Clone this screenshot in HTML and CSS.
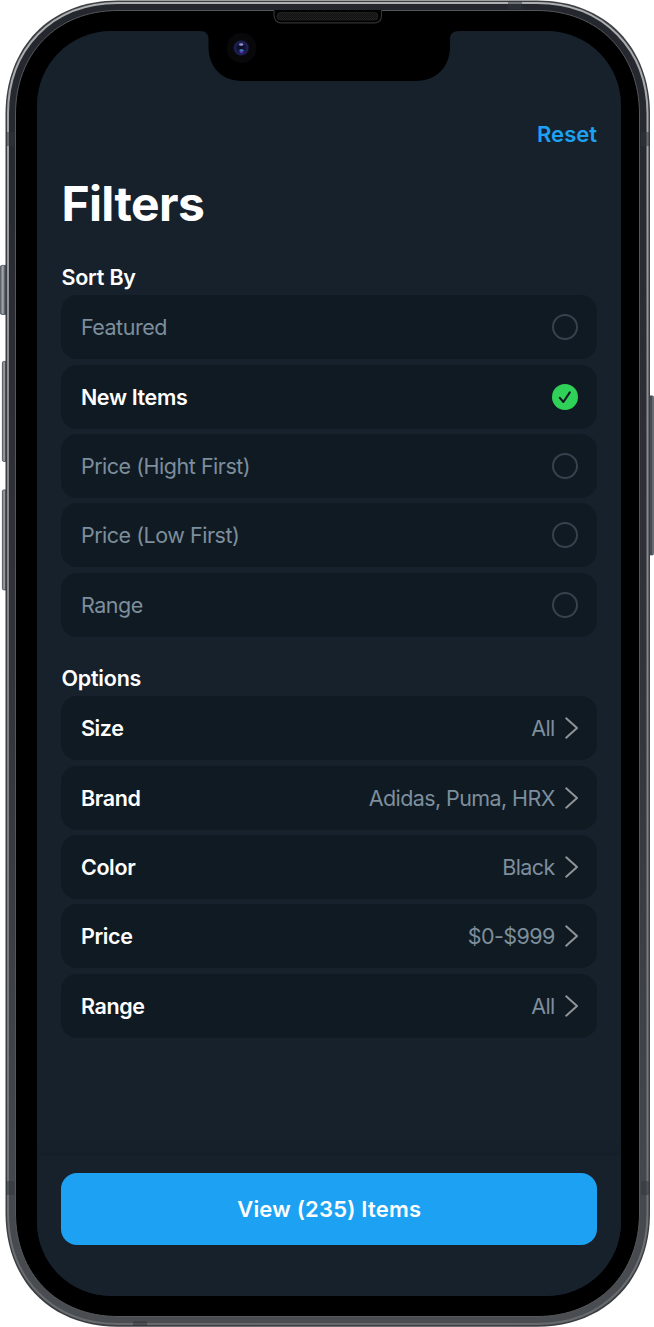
FILE: index.html
```html
<!DOCTYPE html>
<html lang="en">
<head>
<meta charset="utf-8">
<title>Filters</title>
<link rel="stylesheet" href="styles.css">
</head>
<body>
<div class="device">
  <svg class="frame" viewBox="0 0 654 1327" aria-hidden="true">
    <defs>
      <linearGradient id="side" x1="0" x2="1"><stop offset="0" stop-color="#5b6066"/><stop offset=".35" stop-color="#a9adb1"/><stop offset=".6" stop-color="#596069"/><stop offset="1" stop-color="#41464d"/></linearGradient>
      <linearGradient id="sideR" x1="1" x2="0"><stop offset="0" stop-color="#8c9094"/><stop offset=".45" stop-color="#3b4045"/><stop offset="1" stop-color="#777b80"/></linearGradient>
      <linearGradient id="shine" x1="0" x2="0" y1="0" y2="1"><stop offset="0" stop-color="#aeb0b0"/><stop offset=".3" stop-color="#8b8c91"/><stop offset=".85" stop-color="#73767b"/><stop offset="1" stop-color="#67696c"/></linearGradient>
      <linearGradient id="band" x1="0" x2="0" y1="0" y2="1"><stop offset="0" stop-color="#24272e"/><stop offset=".5" stop-color="#32323a"/><stop offset=".85" stop-color="#42464b"/><stop offset="1" stop-color="#4a4d51"/></linearGradient>
      <pattern id="mesh" width="2" height="2" patternUnits="userSpaceOnUse"><rect width="2" height="2" fill="#111"/><rect width="1" height="1" fill="#222"/><rect x="1" y="1" width="1" height="1" fill="#1d1d1d"/></pattern>
      <radialGradient id="lens"><stop offset="0" stop-color="#0b0c20"/><stop offset=".5" stop-color="#10123a"/><stop offset=".8" stop-color="#20235c"/><stop offset="1" stop-color="#0c0c18"/></radialGradient>
    </defs>
    <g stroke="#444a51" stroke-width=".8">
      <rect x=".4" y="265.4" width="7" height="49" rx="1.5" fill="url(#side)"/>
      <rect x="2.4" y="361.4" width="5" height="100" rx="1.5" fill="url(#side)"/>
      <rect x="2.4" y="489.9" width="5" height="100" rx="1.5" fill="url(#side)"/>
      <rect x="648" y="395.9" width="5.7" height="159" rx="1.5" fill="url(#sideR)"/>
    </g>
    <path id="body" fill="#3b3e43" d="M118 .5H537C606 .5 650 48 650 114V1213C650 1279 606 1326.7 537 1326.7H118C49 1326.7 5.500 1279 5.500 1213V114C5.500 48 49 .5 118 .5Z"/>
    <path fill="url(#band)" stroke="url(#shine)" stroke-width="2" d="M118 3H537C604 3 647.500 50 647.500 114V1213C647.500 1277 604 1324 537 1324H118C51 1324 8 1277 8 1213V114C8 50 51 3 118 3Z"/>
    <path fill="#000" stroke="#55585b" stroke-width="1" d="M118 10.500H537C599 10.500 639.500 54 639.500 114V1213C639.500 1273 599 1316.500 537 1316.500H118C56 1316.500 15.500 1273 15.500 1213V114C15.500 54 56 10.500 118 10.500Z"/>
    <g fill="#30363c" fill-opacity=".5">
      <rect x="508" y="1" width="14" height="8"/>
      <rect x="6" y="132" width="8.500" height="14"/><rect x="641" y="132" width="8.500" height="14"/>
      <rect x="6" y="1181" width="8.500" height="14"/><rect x="641" y="1181" width="8.500" height="14"/>
      <rect x="133" y="1321" width="14" height="5"/>
    </g>
  </svg>

  <main class="screen">
    <header class="toolbar"><a class="reset">Reset</a></header>
    <h1 class="title">Filters</h1>

    <h2 class="section-title">Sort By</h2>
    <ul class="list">
      <li class="row muted"><span>Featured</span><i class="radio"></i></li>
      <li class="row"><span class="strong">New Items</span>
        <svg class="check" viewBox="0 0 26 26"><circle cx="13" cy="13" r="13" fill="#30d158"/><path d="M7.800 13.900L11.400 18L17.800 8.400" fill="none" stroke="#101a23" stroke-width="2.100" stroke-linecap="round" stroke-linejoin="round"/></svg></li>
      <li class="row muted"><span>Price (Hight First)</span><i class="radio"></i></li>
      <li class="row muted"><span>Price (Low First)</span><i class="radio"></i></li>
      <li class="row muted"><span>Range</span><i class="radio"></i></li>
    </ul>

    <h2 class="section-title options-title">Options</h2>
    <ul class="list">
      <li class="row"><span class="strong">Size</span><span class="value">All<svg class="chevron" viewBox="0 0 13 22"><path d="M1.200 1.300L12 11L1.200 20.700"/></svg></span></li>
      <li class="row"><span class="strong">Brand</span><span class="value">Adidas, Puma, HRX<svg class="chevron" viewBox="0 0 13 22"><path d="M1.200 1.300L12 11L1.200 20.700"/></svg></span></li>
      <li class="row"><span class="strong">Color</span><span class="value">Black<svg class="chevron" viewBox="0 0 13 22"><path d="M1.200 1.300L12 11L1.200 20.700"/></svg></span></li>
      <li class="row"><span class="strong">Price</span><span class="value">$0-$999<svg class="chevron" viewBox="0 0 13 22"><path d="M1.200 1.300L12 11L1.200 20.700"/></svg></span></li>
      <li class="row"><span class="strong">Range</span><span class="value">All<svg class="chevron" viewBox="0 0 13 22"><path d="M1.200 1.300L12 11L1.200 20.700"/></svg></span></li>
    </ul>

    <footer class="footer"><button class="view">View (235) Items</button></footer>
  </main>

  <svg class="notch" viewBox="0 0 260 86" aria-hidden="true">
    <path d="M0 31C6 31 8.500 34 8.500 39V47C8.500 67 22 81 42 81H216C236 81 250 67 250 47V39C250 34 252.500 31 260 31V12H0Z" fill="#000"/>
    <path d="M74 10V15C74 20 77 22.800 81 22.800H175C179 22.800 181.500 20 181.500 15V10" fill="#000" stroke="#303234" stroke-width="1.200"/>
    <rect x="77" y="12.500" width="101" height="7.500" rx="3.700" fill="url(#mesh)" stroke="#292929" stroke-width=".7"/>
    <circle cx="41.500" cy="48" r="15" fill="#08080a"/>
    <circle cx="41.200" cy="48" r="8" fill="url(#lens)"/>
    <ellipse cx="41.200" cy="44.500" rx="2.200" ry="1.300" fill="#9a93c8"/>
    <ellipse cx="41.500" cy="50.500" rx="2.200" ry="1.600" fill="#3d7aa8"/>
    <ellipse cx="41.500" cy="52.300" rx="1.800" ry="1" fill="#5b2bb0"/>
  </svg>
</div>
</body>
</html>
```
FILE: styles.css
```css
* { box-sizing: border-box; }
body {
  margin: 0;
  background: #fff;
  font-family: Inter, "Liberation Sans", sans-serif;
  color: #fff;
}
.device {
  position: relative;
  width: 654px;
  height: 1327px;
  padding: 31px 33px 31px 37px;
  overflow: hidden;
}
.frame {
  position: absolute;
  inset: 0;
  width: 654px;
  height: 1327px;
}
.notch {
  position: absolute;
  left: 200px;
  top: 0;
  width: 260px;
  height: 86px;
}
.screen {
  position: relative;
  display: flex;
  flex-direction: column;
  height: 1265px;
  padding: 88px 24px 0 24.400px;
  border-radius: 74px;
  background: #17212b;
  overflow: hidden;
}
.toolbar {
  display: flex;
  justify-content: flex-end;
  height: 30px;
}
.reset {
  font-size: 22px;
  line-height: 30px;
  font-weight: 560;
  letter-spacing: 0;
  color: #1da1f2;
}
.title {
  margin: 25px 0 0;
  font-size: 48px;
  line-height: 60px;
  font-weight: 700;
  letter-spacing: -.6px;
}
.section-title {
  margin: 28px 0 0;
  height: 33.400px;
  font-size: 21.5px;
  line-height: 30px;
  font-weight: 580;
  letter-spacing: -.2px;
}
.options-title { margin-top: 26px; }
.list {
  display: flex;
  flex-direction: column;
  gap: 5.350px;
  margin: 0;
  padding: 0;
  list-style: none;
}
.row {
  display: flex;
  align-items: center;
  justify-content: space-between;
  height: 64px;
  padding: 0 19px 0 19.500px;
  border-radius: 16px;
  background: #101a23;
  font-size: 21.5px;
  letter-spacing: -.48px;
}
.muted, .value { color: #7d8e9c; }
.strong {
  font-weight: 580;
  letter-spacing: -.35px;
}
.radio {
  width: 26px;
  height: 26px;
  border: 2px solid #36424d;
  border-radius: 50%;
}
.check { width: 26px; height: 26px; }
.value {
  display: flex;
  align-items: center;
  gap: 10.300px;
  letter-spacing: -.6px;
}
.chevron {
  width: 13px;
  height: 22px;
  fill: none;
  stroke: #919497;
  stroke-width: 2;
  stroke-linecap: round;
  stroke-linejoin: round;
}
.footer {
  margin: auto -24px 0 -24.400px;
  padding: 17px 24px 51px 24.400px;
  background: #17212b;
  box-shadow: 0 -1px 14px rgba(0, 0, 0, .1);
}
.view {
  display: block;
  width: 100%;
  height: 72px;
  border: 0;
  border-radius: 16px;
  background: #1da1f2;
  color: #fff;
  font: 560 22px Inter, sans-serif;
  letter-spacing: .2px;
}
```
